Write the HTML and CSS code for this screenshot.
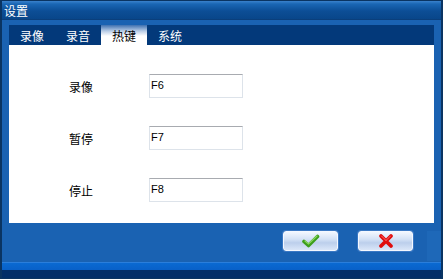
FILE: index.html
```html
<!DOCTYPE html>
<html>
<head>
    <title>设置</title>
    <link rel="stylesheet" href="styles.css">
</head>
<body>
    <div class="window">
        <div class="titlebar">设置</div>
        <div class="frame">
            <div class="panel">
                <div class="tabs">
                    <div class="tab">录像</div>
                    <div class="tab">录音</div>
                    <div class="tab active">热键</div>
                    <div class="tab">系统</div>
                </div>
                <div class="content">
                    <div class="row">
                        <span class="label">录像</span>
                        <input class="field" type="text" value="F6">
                    </div>
                    <div class="row">
                        <span class="label">暂停</span>
                        <input class="field" type="text" value="F7">
                    </div>
                    <div class="row">
                        <span class="label">停止</span>
                        <input class="field" type="text" value="F8">
                    </div>
                </div>
            </div>
            <div class="footer">
                <button class="btn">
                    <svg width="18" height="14" viewBox="0 0 18 14">
                        <path d="M2 7.5 L6.5 11.5 L15.5 2.5" fill="none" stroke="#3c9e1c" stroke-width="3.6" stroke-linecap="round" stroke-linejoin="round"/>
                        <path d="M3 7 L6.5 10 L15 2" fill="none" stroke="#8ad860" stroke-width="1.2" stroke-linecap="round"/>
                    </svg>
                </button>
                <button class="btn">
                    <svg width="16" height="16" viewBox="0 0 16 16">
                        <path d="M3 3 L13 13 M13 3 L3 13" fill="none" stroke="#e00c0c" stroke-width="3.8" stroke-linecap="round"/>
                        <path d="M3.5 3 L8 7.5 M12.5 3 L8 7.5" fill="none" stroke="#ff6a6a" stroke-width="1" stroke-linecap="round"/>
                    </svg>
                </button>
                <div class="grip"></div>
            </div>
        </div>
        <div class="statusbar"></div>
    </div>
</body>
</html>
```

FILE: styles.css
```css
body {
    margin: 0;
    font-family: "Noto Sans CJK SC", "DejaVu Sans", sans-serif;
    font-size: 12px;
}
.window {
    width: 443px;
    height: 279px;
    box-sizing: border-box;
    border: 1px solid #0a3462;
    border-left-width: 2px;
    border-right-width: 2px;
    display: flex;
    flex-direction: column;
    background-color: #1a62b2;
}
.titlebar {
    height: 18px;
    line-height: 20px;
    padding-left: 2px;
    color: #fff;
    background: linear-gradient(#3a82cc 0px, #1a66b4 3px, #0c4e96 10px, #08468a 18px);
    border-bottom: 1px solid #0a3f7c;
}
.frame {
    flex: 1;
    display: flex;
    flex-direction: column;
    padding: 5px 7px 0 7px;
    position: relative;
}
.panel {
    display: flex;
    flex-direction: column;
}
.tabs {
    height: 20px;
    display: flex;
    background-color: #03397a;
}
.tab {
    width: 46px;
    line-height: 22px;
    text-align: center;
    color: #fff;
}
.tab.active {
    color: #000;
    background: linear-gradient(#3e70b0 0px, #b8cce6 6px, #fff 11px);
}
.content {
    height: 149px;
    background-color: #fff;
    padding-top: 29px;
    display: flex;
    flex-direction: column;
    gap: 28px;
}
.row {
    display: flex;
    align-items: center;
    height: 24px;
}
.label {
    width: 80px;
    padding-left: 60px;
    padding-top: 1px;
    color: #000;
}
.field {
    width: 94px;
    height: 24px;
    box-sizing: border-box;
    margin: 0;
    padding: 0 0 2px 1px;
    border: 1px solid #dde3ea;
    border-top-color: #a8abb0;
    font-family: "Liberation Sans", sans-serif;
    font-size: 11px;
    color: #000;
    outline: none;
}
.footer {
    height: 39px;
    box-sizing: border-box;
    display: flex;
    justify-content: flex-end;
    gap: 20px;
    padding: 8px 21px 0 0;
}
.grip {
    position: absolute;
    right: 0;
    bottom: 1px;
    width: 14px;
    height: 30px;
    background-color: #1e68b8;
}
.btn {
    width: 55px;
    height: 20px;
    padding: 0;
    display: flex;
    align-items: center;
    justify-content: center;
    border: 1px solid #f4f8ff;
    border-radius: 3px;
    background: linear-gradient(#f2f7ff 0%, #d4e2f6 40%, #bccfec 60%, #dae6f8 100%);
    box-shadow: 0 0 0 1px #3a78c4;
}
.statusbar {
    height: 17px;
    background: linear-gradient(#4a92e4 0px, #0a6ad2 1px, #0860c8 8px, #022e68 8px, #022e68 17px);
}
```
